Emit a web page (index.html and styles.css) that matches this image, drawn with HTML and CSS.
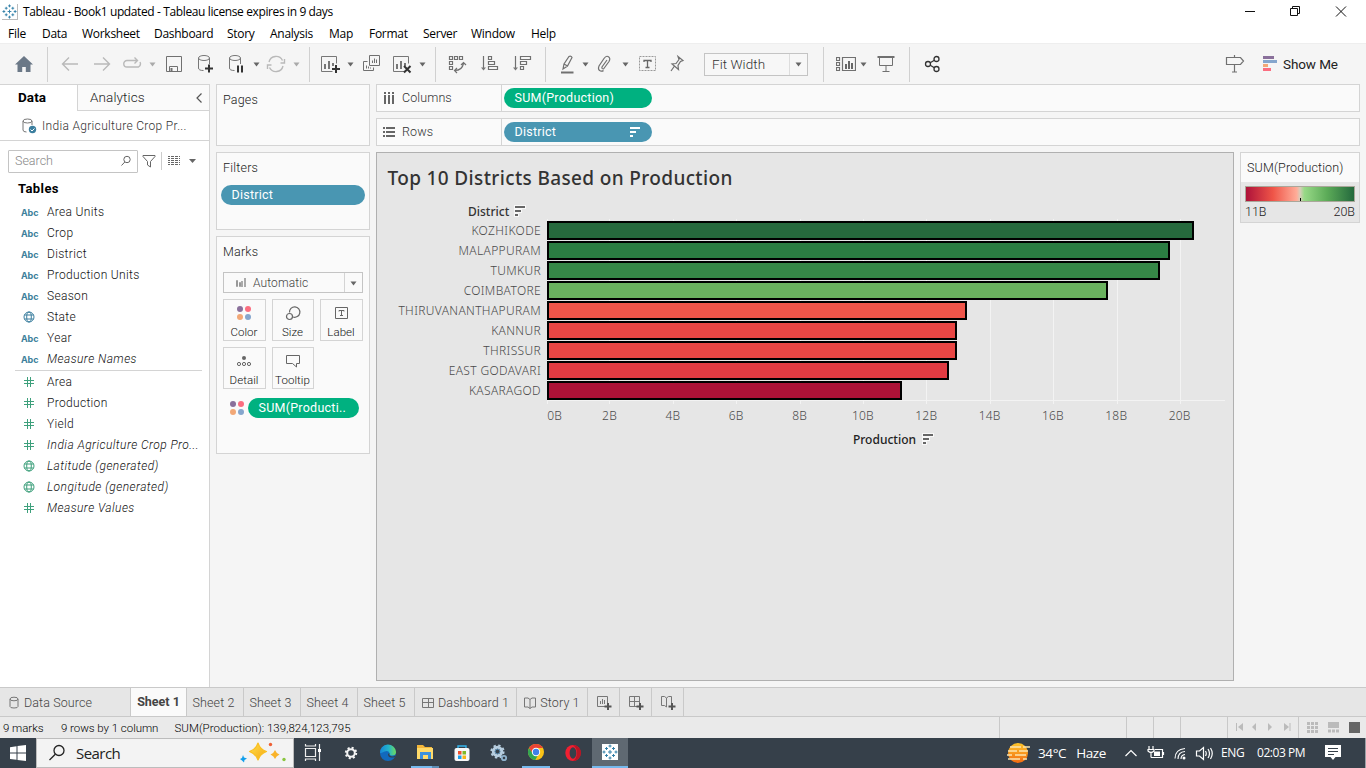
FILE: index.html
```html
<!DOCTYPE html>
<html lang="en">
<head>
<meta charset="utf-8">
<title>Tableau - Book1 updated</title>
<link rel="stylesheet" href="styles.css">
</head>
<body>
<svg class="defs" aria-hidden="true">
  <symbol id="caret" viewBox="0 0 7 20"><path d="M.5 8.500h6l-3 4z"/></symbol>
  <symbol id="hash" viewBox="0 0 12 12"><path d="M4.500 1v10M7.500 1v10M1 4.500h10M1 7.500h10" fill="none" stroke="#3ea07c"/></symbol>
  <symbol id="globe" viewBox="0 0 12 12"><g fill="none" stroke="currentColor"><circle cx="6" cy="6" r="5"/><ellipse cx="6" cy="6" rx="2.300" ry="5"/><path d="M1.500 4h9M1.500 8h9"/></g></symbol>
  <symbol id="dots" viewBox="0 0 16 16"><circle cx="4" cy="4" r="3" fill="#8a709b"/><circle cx="12" cy="4" r="3" fill="#fb6e80"/><circle cx="4" cy="12" r="3" fill="#f2a877"/><circle cx="12" cy="12" r="3" fill="#85a6cd"/></symbol>
  <symbol id="sort" viewBox="0 0 12 12"><path d="M1 1h10v2H1zM1 5h6v2H1zM1 9h3v2H1z"/></symbol>
  <symbol id="sort-halo" viewBox="0 0 12 12"><path d="M0 0h12v4H8v4H5v4H0z" fill="#f8f8f8"/><path d="M1 1h10v2H1zM1 5h6v2H1zM1 9h3v2H1z"/></symbol>
  <symbol id="bars" viewBox="0 0 20 20"><path d="M12.500 17.500H1.500v-15h15v7" fill="none" stroke="#777"/><path d="M4 10h2v5H4zM8 7h2v8H8zM12 9h2v3h-2z" fill="#777" stroke="none"/></symbol>
  <symbol id="db" viewBox="0 0 20 20"><g fill="none" stroke="#777"><ellipse cx="8" cy="4" rx="5.500" ry="2.500"/><path d="M2.500 4v10q0 2.500 5 2.500M13.500 4v6"/></g></symbol>
  <symbol id="tableau" viewBox="0 0 16 16"><path d="M8 6v4M6 8h4M8 .5v3M6.500 2h3M8 12.500v3M6.500 14h3M.5 8h3M2 6.500v3M12.500 8h3M14 6.500v3M4.500 3v3M3 4.500h3M11.500 3v3M10 4.500h3M4.500 10v3M3 11.500h3M11.500 10v3M10 11.500h3" stroke="#3381a9"/></symbol>
</svg>

<header class="titlebar">
  <svg class="app-logo" viewBox="0 0 16 16"><use href="#tableau"/></svg>
  <span class="title">Tableau - Book1 updated - Tableau license expires in 9 days</span>
  <svg class="win-buttons" viewBox="0 0 110 20" fill="none" stroke="#111"><path d="M5 9.500h10M50.500 6.500h7v7h-7zM52.500 6.500v-2h7v7h-2M96 4.500l10 10M106 4.500l-10 10"/></svg>
</header>
<nav class="menubar">
  <span class="w-file">File</span><span class="w-data">Data</span><span class="w-work">Worksheet</span><span class="w-dash">Dashboard</span><span class="w-story">Story</span><span class="w-ana">Analysis</span><span class="w-map">Map</span><span class="w-form">Format</span><span class="w-serv">Server</span><span class="w-wind">Window</span><span>Help</span>
</nav>

<div class="toolbar">
  <svg class="ic m14" viewBox="0 0 20 20"><path d="M10 2L1 10.500h2.500V18h4.700v-5h3.600v5h4.700v-7.500H19z" fill="#6b7887" stroke="none"/></svg>
  <i class="sep m13"></i>
  <svg class="ic m12 faint" viewBox="0 0 20 20"><path d="M18 10H3M9 3.500L2.500 10 9 16.500"/></svg>
  <svg class="ic m12 faint" viewBox="0 0 20 20"><path d="M2 10h15M11 3.500l6.500 6.500-6.500 6.500"/></svg>
  <svg class="ic m10 faint" viewBox="0 0 20 20"><path d="M15.500 6.500H5a3.200 3.200 0 0 0 0 6.500h11.500q3-2 1.500-5M12.500 3.500l3 3-3 3"/></svg>
  <svg class="caret m7 light"><use href="#caret"/></svg>
  <svg class="ic m8" viewBox="0 0 20 20"><path d="M2.500 2.500h15v15h-15zM5.500 17.500v-5h8v5"/><path d="M7.500 14v3.500" stroke-width="2"/></svg>
  <svg class="ic m12" viewBox="0 0 20 20"><use href="#db"/><path d="M13 10.500v8M9 14.500h8" stroke="#333" stroke-width="2"/></svg>
  <svg class="ic m11" viewBox="0 0 20 20"><use href="#db"/><path d="M11 11.500v7M15 11.500v7" stroke="#333" stroke-width="2"/></svg>
  <svg class="caret m6"><use href="#caret"/></svg>
  <svg class="ic m6 faint" viewBox="0 0 20 20"><path d="M3 8a7.200 7.200 0 0 1 13.500-1.500M17 12a7.200 7.200 0 0 1-13.500 1.500M18.500 5v4h-4M1.500 15v-4h4"/></svg>
  <svg class="caret m7 light"><use href="#caret"/></svg>
  <i class="sep m9"></i>
  <svg class="ic m10" viewBox="0 0 20 20"><use href="#bars"/><path d="M16 11v8M12 15h8" stroke="#333" stroke-width="2"/></svg>
  <svg class="caret m7"><use href="#caret"/></svg>
  <svg class="ic m8" viewBox="0 0 20 20"><path d="M7.500 1.500h10v10h-10zM5.500 7.500h-4v9h10v-3M10.500 9V6.500M12.500 9V4.500M14.500 9V5.500M4.500 14.500v-3M6.500 14.500v-2M8.500 14.500v-1"/></svg>
  <svg class="ic m10" viewBox="0 0 20 20"><use href="#bars"/><path d="M12 12l6.500 6.500M18.500 12L12 18.500" stroke="#333" stroke-width="2"/></svg>
  <svg class="caret m7"><use href="#caret"/></svg>
  <i class="sep m9"></i>
  <svg class="ic m11" viewBox="0 0 20 20"><path d="M2.500 2.500h3v3h-3zM7.500 2.500h3v3h-3zM12.500 2.500h3v3h-3zM2.500 7.500h3v3h-3zM2.500 12.500h3v3h-3zM8 16.500q7 0 8.500-7M14 11l2.500-2.500L19 11M10 14l-2.500 2.500L10 19" stroke-width="1.200"/></svg>
  <svg class="ic m13" viewBox="0 0 20 20"><path d="M3.500 2v13M8.500 2.500h3v3h-3zM8.500 7.500h6v3h-6zM8.500 12.500h9v3h-9z" stroke-width="1.200"/><path d="M1 13.500h5l-2.500 3z" fill="#777" stroke="none"/></svg>
  <svg class="ic m12" viewBox="0 0 20 20"><path d="M3.500 2v13M8.500 2.500h10v3h-10zM8.500 7.500h6v3h-6zM8.500 12.500h3v3h-3z" stroke-width="1.200"/><path d="M1 13.500h5l-2.500 3z" fill="#777" stroke="none"/></svg>
  <i class="sep m13"></i>
  <svg class="ic m12" viewBox="0 0 20 20"><path d="M5 15l1-5 5-7.500q2-1 3 1L9.500 12zM6 10l3.500 2" stroke-width="1.200"/><path d="M3 18.500h12.500" stroke-width="2"/></svg>
  <svg class="caret m4"><use href="#caret"/></svg>
  <svg class="ic m6" viewBox="0 0 20 20"><path d="M12 6l-5 7q-.5 2 1.500 2l5.500-7.500q2-3.500-1-5Q11 1.500 9 4.500l-5 7.500q-1.500 4 1.500 5 2 .5 3-.5" stroke-width="1.200"/></svg>
  <svg class="caret m7"><use href="#caret"/></svg>
  <svg class="ic m9" viewBox="0 0 20 20"><path d="M1.500 2.500h16v14h-16z" stroke="#999" stroke-dasharray="2 1"/><path d="M6 8V6.500h7V8M9.500 6.500v7M7.500 13.500h4" stroke="#666" stroke-width="1.300"/></svg>
  <svg class="ic m9" viewBox="0 0 20 20"><path d="M11 2.500l5 4-2.500 1-2.500 4 .5 4-3.500-3-3-2.500 4-.5 3-4zM7.500 12L4 17" stroke-width="1.200"/></svg>
  <div class="fit m17"><span>Fit Width</span><b><svg class="caret"><use href="#caret"/></svg></b></div>
  <i class="sep m15"></i>
  <svg class="ic m12" viewBox="0 0 20 20"><path d="M.5 3.500h3v3h-3zM.5 8.500h3v3h-3zM.5 13.500h3v3h-3zM6.500 3.500h13v13h-13z" stroke-width="1.200"/><path d="M9 10h2v5H9zM12 7h2v8h-2zM15 9h2v6h-2z" fill="#666" stroke="none"/></svg>
  <svg class="caret m4"><use href="#caret"/></svg>
  <svg class="ic m9" viewBox="0 0 20 20"><path d="M3.500 4v7.500h13V4M10 12v5.500M6.500 17.500h7"/><path d="M1.500 3h17" stroke-width="2"/></svg>
  <i class="sep m13"></i>
  <svg class="ic m12 dark" viewBox="0 0 20 20"><circle cx="6" cy="10" r="2.500"/><circle cx="14.500" cy="5" r="2.500"/><circle cx="14.500" cy="15" r="2.500"/><path d="M8.200 8.700l4.200-2.500M8.200 11.300l4.200 2.500"/></svg>
  <svg class="ic push" viewBox="0 0 20 20"><path d="M1.500 3.500h14l3 3.500-3 3.500h-14zM9.500 1v2.500M9.500 10.500v7M7 18h5" stroke-width="1.200"/></svg>
  <svg class="ic m15 plain" viewBox="0 0 20 20"><path d="M3 2h11v3H3z" fill="#8a709b"/><path d="M3 6h14v3H3z" fill="#85a6cd"/><path d="M3 10h5v3H3z" fill="#f2a877"/><path d="M3 14h8v3H3z" fill="#fb6e80"/></svg>
  <span class="showme">Show Me</span>
</div>

<main class="workspace">
  <aside class="data-pane">
    <div class="pane-tabs"><b>Data</b><div><span>Analytics</span><svg viewBox="0 0 8 12"><path d="M6.500 1.500L2 6l4.500 4.500" fill="none" stroke="#555" stroke-width="1.200"/></svg></div></div>
    <div class="source"><svg viewBox="0 0 16 18"><g fill="none" stroke="#777"><ellipse cx="6.500" cy="4" rx="4.500" ry="2"/><path d="M2 4v9q0 2 3.500 2M11 4v4"/></g><circle cx="11.500" cy="12.500" r="3.700" fill="#3c7f9f"/><path d="M9.500 12.500L11 14l2.500-2.500" fill="none" stroke="#fff"/></svg><span>India Agriculture Crop Pr...</span></div>
    <div class="finder">
      <div class="search"><span>Search</span><svg viewBox="0 0 12 12" fill="none" stroke="#666"><circle cx="7" cy="4.500" r="3.200"/><path d="M4.800 7L1.500 10.500"/></svg></div>
      <svg class="funnel" viewBox="0 0 14 14" fill="none" stroke="#666"><path d="M1 1.500h12v1L8.500 7.500V13l-3-2V7.500L1 2.500z"/></svg>
      <i></i>
      <svg class="list" viewBox="0 0 12 10"><path d="M0 .5h12M0 2.500h12M0 4.500h12M0 6.500h12M0 8.500h12" stroke="#666" stroke-dasharray="3 1" stroke-dashoffset="1" fill="none"/></svg>
      <svg class="down" viewBox="0 0 7 4"><path d="M0 0h7L3.500 4z" fill="#666"/></svg>
    </div>
    <h3>Tables</h3>
    <ul class="fields">
      <li><em>Abc</em>Area Units</li><li><em>Abc</em>Crop</li><li><em>Abc</em>District</li><li><em>Abc</em>Production Units</li><li><em>Abc</em>Season</li>
      <li><svg class="blue"><use href="#globe"/></svg>State</li><li><em>Abc</em>Year</li><li class="it"><em>Abc</em><span>Measure Names</span></li>
    </ul>
    <ul class="fields measures">
      <li><svg><use href="#hash"/></svg>Area</li><li><svg><use href="#hash"/></svg>Production</li><li><svg><use href="#hash"/></svg>Yield</li>
      <li class="it"><svg><use href="#hash"/></svg>India Agriculture Crop Pro...</li><li class="it"><svg class="green"><use href="#globe"/></svg>Latitude (generated)</li><li class="it"><svg class="green"><use href="#globe"/></svg>Longitude (generated)</li><li class="it"><svg><use href="#hash"/></svg>Measure Values</li>
    </ul>
  </aside>

  <section class="cards">
    <div class="card pages"><h4>Pages</h4></div>
    <div class="card filters"><h4>Filters</h4><div class="pill blue-pill">District</div></div>
    <div class="card marks"><h4>Marks</h4>
      <div class="mark-type"><svg viewBox="0 0 12 12"><path d="M1.500 3.500h1v6h-1zM4.500 5.500h1v4h-1z" fill="none" stroke="#999"/><path d="M6 4h2v6H6zM9 1h2v9H9z" fill="#aaa"/></svg><span>Automatic</span><b><svg class="caret"><use href="#caret"/></svg></b></div>
      <div class="mark-grid">
        <div><svg viewBox="0 0 16 16"><use href="#dots"/></svg>Color</div>
        <div><svg viewBox="0 0 16 16" fill="none" stroke="#666" stroke-width="1.200"><path d="M4.500 7.500a5.200 5.200 0 1 1 3.500 4.500"/><circle cx="4.500" cy="11.500" r="3"/></svg>Size</div>
        <div><svg viewBox="0 0 16 16" fill="none" stroke="#666"><path d="M2.500 2.500h12v11h-12z"/><path d="M6 6.500V5.500h5v1M8.500 5.500v5M7 10.500h3"/></svg>Label</div>
        <div><svg viewBox="0 0 16 16" fill="none" stroke="#666"><circle cx="8" cy="5" r="2" fill="#666" stroke="none"/><circle cx="3" cy="11" r="1.600"/><circle cx="8" cy="11" r="1.600"/><circle cx="13" cy="11" r="1.600"/></svg>Detail</div>
        <div><svg viewBox="0 0 16 16" fill="none" stroke="#666"><path d="M1.500 2.500h13v8h-3v3.500l-4-3.500h-6z"/></svg>Tooltip</div>
      </div>
      <div class="encoding"><svg viewBox="0 0 16 16"><use href="#dots"/></svg><div class="pill green-pill">SUM(Producti..</div></div>
    </div>
  </section>

  <section class="sheet">
    <div class="shelf"><div><svg viewBox="0 0 12 12"><path d="M2 0v2M6 0v2M10 0v2M2 3v9M6 3v9M10 3v9" stroke="#666" stroke-width="2"/></svg>Columns</div><div class="pill green-pill">SUM(Production)</div></div>
    <div class="shelf"><div><svg viewBox="0 0 12 12"><path d="M0 2h2M0 6h2M0 10h2M3 2h9M3 6h9M3 10h9" stroke="#666" stroke-width="2"/></svg>Rows</div><div class="pill blue-pill">District<svg viewBox="0 0 12 12"><use href="#sort"/></svg></div></div>
    <div class="view-row">
      <div class="view">
        <h1>Top 10 Districts Based on Production</h1>
        <div class="row-title"><span>District</span><svg viewBox="0 0 12 12"><use href="#sort-halo"/></svg></div>
        <div class="chart">
          <div class="names"><span>KOZHIKODE</span><span>MALAPPURAM</span><span>TUMKUR</span><span>COIMBATORE</span><span>THIRUVANANTHAPURAM</span><span>KANNUR</span><span>THRISSUR</span><span>EAST GODAVARI</span><span>KASARAGOD</span></div>
          <div class="plot">
            <svg class="grid" viewBox="0 0 678 186" fill="none" stroke="#f3f3f3"><path d="M.5 0v185M62.500 0v185M126.500 0v185M189.500 0v185M253.500 0v185M316.500 0v185M379.500 0v185M443.500 0v185M506.500 0v185M570.500 0v185M633.500 0v185M0 181.500h678"/></svg>
            <div class="bars">
            <div style="width:647px;background:#26693d"></div><div style="width:623px;background:#2b7d42"></div><div style="width:613px;background:#368747"></div><div style="width:561px;background:#6ab15f"></div><div style="width:420px;background:#ef554a"></div><div style="width:410px;background:#e94644"></div><div style="width:410px;background:#e94644"></div><div style="width:402px;background:#e13b42"></div><div style="width:355px;background:#ac1237"></div>
            </div>
          </div>
        </div>
        <div class="axis"><span>0B</span><span>2B</span><span>4B</span><span>6B</span><span>8B</span><span>10B</span><span>12B</span><span>14B</span><span>16B</span><span>18B</span><span>20B</span></div>
        <div class="axis-title"><span>Production</span><svg viewBox="0 0 12 12"><use href="#sort-halo"/></svg></div>
      </div>
      <div class="legend"><h4>SUM(Production)</h4><div class="legend-body"><div class="ramp"><i></i></div><div class="ends"><span>11B</span><span>20B</span></div></div></div>
    </div>
  </section>
</main>

<div class="tabs">
  <div class="t-source"><svg viewBox="0 0 12 14" fill="none" stroke="#777"><ellipse cx="6" cy="3" rx="4" ry="1.800"/><path d="M2 3v7.500q0 1.500 4 1.500t4-1.500V3"/></svg>Data Source</div>
  <div class="t-sheet active">Sheet 1</div><div class="t-sheet">Sheet 2</div><div class="t-sheet">Sheet 3</div><div class="t-sheet">Sheet 4</div><div class="t-sheet">Sheet 5</div>
  <div class="t-dash"><svg viewBox="0 0 12 12" fill="none" stroke="#777"><path d="M.5 1.500h11v9H.5zM6.500 1v10M.5 5.500h11"/></svg>Dashboard 1</div>
  <div class="t-story"><svg viewBox="0 0 12 12" fill="none" stroke="#777"><path d="M6 2.500L4 1H.5v9H4l2 1.500L8 10h3.500V1H8zM6 2.500v9"/></svg>Story 1</div>
  <div class="t-new"><svg viewBox="0 0 16 16" fill="none" stroke="#777"><path d="M10 11.500H1.500v-10h10v7M4.500 9V6M6.500 9V4M8.500 9V5"/><path d="M12 8v7M8.500 11.500h7" stroke="#555" stroke-width="2"/></svg></div>
  <div class="t-new"><svg viewBox="0 0 16 16" fill="none" stroke="#777"><path d="M9 11.500H1.500v-10h10V8M6.500 1.500v10M1.500 6.500h10"/><path d="M12 8v7M8.500 11.500h7" stroke="#555" stroke-width="2"/></svg></div>
  <div class="t-new"><svg viewBox="0 0 16 16" fill="none" stroke="#777"><path d="M6.500 3l-2-1.500h-3v9h3l2 1.500M6.500 3l2-1.500h3V8M6.500 3v9"/><path d="M12 8v7M8.500 11.500h7" stroke="#555" stroke-width="2"/></svg></div>
</div>

<footer class="status">
  <span class="s1">9 marks</span><span class="s2">9 rows by 1 column</span><span class="s3">SUM(Production): 139,824,123,795</span>
  <i class="c1"></i><i class="c2"></i><i class="c2"></i><i class="c3"></i>
  <div class="nav"><svg viewBox="0 0 70 20" fill="#bbb"><path d="M10 10l5-4v8zM8 6h1v8H8zM24 10l4-4v8zM44 10l-4-4v8zM61 10l-5-4v8zM61.500 6h1v8h-1z"/></svg></div>
  <div class="modes"><svg viewBox="0 0 60 20"><path d="M8 6.500h11M8 10.500h11M8 14.500h11" stroke="#bbb" stroke-width="3" stroke-dasharray="3 1"/><path d="M29 5h11v6H29z" fill="#bbb"/><path d="M29 14h11" stroke="#bbb" stroke-width="3" stroke-dasharray="3 1"/><path d="M50 5h11v11H50z" fill="#666"/></svg></div>
</footer>

<div class="taskbar">
  <div class="start"><svg viewBox="0 0 16 16" fill="#fff"><path d="M0 2.200L6.500 1.300v6.200H0zM7.500 1.100L16 0v7.500H7.500zM0 8.500h6.500v6.300L0 13.900zM7.500 8.500H16V16l-8.500-1.100z"/></svg></div>
  <div class="tb-search"><svg class="mag" viewBox="0 0 18 18" fill="none" stroke="#222" stroke-width="1.300"><circle cx="11" cy="6.500" r="5"/><path d="M7.300 10.200L1.500 16"/></svg><span>Search</span>
    <svg class="spark" viewBox="0 0 48 22"><defs><linearGradient id="gold" x2="1" y2="1"><stop stop-color="#ffe14a"/><stop offset="1" stop-color="#f5a614"/></linearGradient></defs><path d="M19 1q2 6.500 8.500 8.500Q21 12 19 18q-2-6-8.500-8.500Q17 7.500 19 1z" fill="url(#gold)" stroke="#f9bf22" stroke-width="1.200" stroke-linejoin="round"/><path d="M36 8q1 3 4.500 4.500Q37 14 36 17q-1-3-4.500-4.500Q35 11 36 8z" fill="#f9b32a"/><path d="M4 13l1 2.500L8 16.500 5.500 18 5 20.500 3 18.500 1 17l2-1z" fill="#109eeb"/><circle cx="31.500" cy="2.500" r="1.700" fill="#ee6035"/><circle cx="45" cy="17.500" r="1.700" fill="#8ac53f"/></svg></div>
  <svg class="app" viewBox="0 0 20 20" fill="none" stroke="#eee" stroke-width="1.200"><path d="M2.500 5.500h10v8h-10zM2.500 1v2h10V1M2.500 18v-2h10v2M16.500 1v17"/><path d="M15 6h3v3h-3z" fill="#fff" stroke="none"/></svg>
  <svg class="app" viewBox="0 0 20 20" fill="none" stroke="#f4f4f4"><circle cx="10" cy="10" r="3.800" stroke-width="2"/><circle cx="10" cy="10" r="5.200" stroke-width="2" stroke-dasharray="2.040 2.040"/></svg>
  <svg class="app" viewBox="0 0 20 20"><defs><linearGradient id="edge" x2="1"><stop stop-color="#1685d9"/><stop offset=".55" stop-color="#23b5c9"/><stop offset="1" stop-color="#71dc59"/></linearGradient></defs><circle cx="10" cy="10" r="8" fill="#1269bd"/><path d="M2 10a8 8 0 0 1 16-1q0 4-5 3.500-2-.5-1.500-2.500-1-3-5-1.500Q2.500 10.500 2 10z" fill="url(#edge)"/><path d="M11.500 10q-1 3 2.500 3.500 2 .2 3.500-1l-.5 1.500q-7 2-7-3z" fill="#36404a"/></svg>
  <div class="running two"><svg class="app" viewBox="0 0 20 20"><path d="M2 3h6l2 2h7v12H2z" fill="#f3b63a"/><path d="M2 6h16v11H2z" fill="#ffda69"/><path d="M5 17v-7h11v7h-3v-4H8v4z" fill="#3c91dc"/></svg></div>
  <svg class="app" viewBox="0 0 20 20"><path d="M6 6V3h8v3" fill="none" stroke="#36b5ed" stroke-width="1.400"/><rect x="2.500" y="5" width="15" height="13" rx="2" fill="#f8f8f8"/><path d="M6 8h3.500v3.500H6z" fill="#ef512e"/><path d="M10.500 8H14v3.500h-3.500z" fill="#80b927"/><path d="M6 12.500h3.500V16H6z" fill="#199eea"/><path d="M10.500 12.500H14V16h-3.500z" fill="#f9b615"/></svg>
  <svg class="app" viewBox="0 0 20 20" fill="none"><circle cx="8.500" cy="8.500" r="4.200" stroke="#b7cee0" stroke-width="3"/><circle cx="8.500" cy="8.500" r="6.200" stroke="#b7cee0" stroke-width="1.800" stroke-dasharray="2.400 2.470"/><circle cx="15" cy="15" r="2.200" stroke="#8fb2cd" stroke-width="1.800"/><circle cx="8.500" cy="8.500" r="2.300" stroke="#598bb0"/></svg>
  <div class="running"><svg class="app" viewBox="0 0 20 20"><circle cx="10" cy="10" r="8" fill="#fbc316"/><path d="M3.070 6a8 8 0 0 0 6.200 12l3.700-6.500L10 10l-3 1.500z" fill="#31a653"/><path d="M3.070 6A8 8 0 0 1 16.930 6H10L6.500 11z" fill="#e94335"/><circle cx="10" cy="10" r="4.200" fill="#fff"/><circle cx="10" cy="10" r="3.200" fill="#3f80e9"/></svg></div>
  <svg class="app" viewBox="0 0 20 20"><ellipse cx="10" cy="10" rx="7.700" ry="8" fill="#f21f31"/><path d="M10 2a8 8 0 0 1 0 16q4-3 4-8t-4-8z" fill="#b91524"/><ellipse cx="10" cy="10" rx="3.400" ry="5.800" fill="#36404a"/></svg>
  <div class="running current"><span><svg viewBox="0 0 16 16"><use href="#tableau"/></svg></span></div>
  <div class="tray">
    <svg class="haze" viewBox="0 0 24 22"><defs><linearGradient id="sun" y2="1" x2="0"><stop stop-color="#ffc62a"/><stop offset="1" stop-color="#f16a12"/></linearGradient></defs><circle cx="12" cy="11" r="10" fill="url(#sun)"/><path d="M4 5h11M17 5h7M2 9h9M13 9h9M1 13h5M9 13h11M2 17h12M17 17h4" stroke="#fbe5ae" stroke-width="1.700"/></svg>
    <span class="weather"><span>34°C</span><span>Haze</span></span>
    <svg class="icons" viewBox="0 0 90 20" fill="none" stroke="#fff" stroke-width="1.200"><path d="M1.500 13L7 7.500l5.500 5.500M31 6.500h7.500v8H27M39.500 9v3M25 3v3M29 3v3M24 6.500h6v1.500q-3 3-6 0zM27 9.500v5"/><path d="M30 8.500h6v4.500h-6z" fill="#fff" stroke="none"/><path d="M51 15.500q0-9 10-10M54 16q0-7 7-7.500M57 16q0-4 4-4.500" stroke-width="1.100"/><circle cx="60" cy="15" r="1.500" fill="#fff" stroke="none"/><path d="M72.500 8h3l4-3.500v12l-4-3.500h-3zM81.500 8q1.500 2.500 0 5M84 6q3 4.500 0 9M86.500 5q3.500 5.500 0 11"/></svg>
    <span class="lang">ENG</span><span class="clock">02:03 PM</span>
    <svg class="notice" viewBox="0 0 18 18"><path d="M1 1h16v12h-5.500L9 16l-2.500-3H1z" fill="#fff"/><path d="M4 4.500h10M4 7.500h10M4 10.500h6" stroke="#36404a"/></svg>
    <i></i>
  </div>
</div>
</body>
</html>
```

FILE: styles.css
```css
* { box-sizing: border-box; }
body { margin: 0; width: 1366px; height: 768px; overflow: hidden; background: #f5f5f5; color: #222; font: 300 12px/16px Roboto, "Liberation Sans", sans-serif; display: flex; flex-direction: column; }
svg { display: block; flex: none; }
h1, h3, h4, ul { margin: 0; padding: 0; font-weight: 300; list-style: none; }
i, em { font-style: normal; }
.defs { position: absolute; width: 0; height: 0; }

.titlebar { height: 23px; background: #fff; display: flex; align-items: center; color: #000; font: 12px/20px "Open Sans", sans-serif; }
.app-logo { width: 16px; height: 16px; margin: 0 5px 0 2px; border-right: 1px solid #bbb; border-bottom: 1px solid #bbb; }
.title { letter-spacing: -.38px; }
.win-buttons { width: 110px; height: 20px; margin: 0 16px 0 auto; }
.menubar { height: 20px; background: #fff; color: #000; display: flex; padding-left: 8px; font: 12px/21px "Open Sans", sans-serif; letter-spacing: -.28px; white-space: nowrap; }
.w-file { width: 34px; } .w-data { width: 40px; } .w-work { width: 72px; } .w-dash { width: 73px; } .w-story { width: 43px; } .w-ana { width: 59px; } .w-map { width: 40px; } .w-form { width: 54px; } .w-serv { width: 48px; } .w-wind { width: 60px; }

.toolbar { height: 41px; display: flex; align-items: center; background: #f5f5f5; border-top: 1px solid #eee; }
.ic { width: 20px; height: 20px; fill: none; stroke: #707070; }
.ic.faint { stroke: #b9b9b9; stroke-width: 1.400; }
.ic.dark { stroke: #333; stroke-width: 1.300; }
.ic.plain { stroke: none; }
.caret { width: 7px; height: 20px; fill: #666; }
.caret.light { fill: #aaa; }
.sep { width: 1px; height: 35px; background: #d0d0d0; flex: none; }
.m4 { margin-left: 4px; } .m6 { margin-left: 6px; } .m7 { margin-left: 7px; } .m8 { margin-left: 8px; } .m9 { margin-left: 9px; } .m10 { margin-left: 10px; } .m11 { margin-left: 11px; } .m12 { margin-left: 12px; } .m13 { margin-left: 13px; } .m14 { margin-left: 14px; } .m15 { margin-left: 15px; } .m17 { margin-left: 17px; }
.fit { width: 104px; height: 23px; border: 1px solid #c4c4c4; display: flex; padding-left: 7px; background: #f7f7f7; font-size: 13.500px; line-height: 21px; color: #333; letter-spacing: .05px; }
.fit b { width: 18px; margin-left: auto; border-left: 1px solid #ddd; display: flex; justify-content: center; }
.push { margin-left: auto; }
.showme { width: 83px; margin-left: 3px; font-size: 13.500px; font-weight: 400; letter-spacing: -.1px; }

.workspace { height: 603px; display: flex; }
.data-pane { width: 210px; background: #fff; border-right: 1px solid #d4d4d4; border-top: 1px solid #d4d4d4; display: flex; flex-direction: column; }
.pane-tabs { height: 26px; display: flex; font-size: 13.500px; line-height: 25px; }
.pane-tabs b { width: 77px; padding-left: 18px; color: #000; font-weight: 700; letter-spacing: .1px; }
.pane-tabs div { flex: 1; display: flex; align-items: center; padding: 0 6px 0 12px; border-left: 1px solid #d4d4d4; border-bottom: 1px solid #d4d4d4; background: #fafafa; letter-spacing: .1px; }
.pane-tabs svg { width: 8px; height: 12px; margin-left: auto; }
.source { height: 30px; display: flex; align-items: center; border-bottom: 1px solid #d4d4d4; padding-left: 21px; color: #333; font-size: 12px; letter-spacing: .32px; white-space: nowrap; }
.source svg { width: 16px; height: 18px; margin-right: 5px; }
.finder { display: flex; align-items: center; height: 40px; padding-left: 8px; }
.search { width: 130px; height: 23px; border: 1px solid #c4c4c4; border-radius: 1px; display: flex; align-items: center; justify-content: space-between; padding: 0 5px 0 6px; color: #888; font-size: 12.500px; }
.search svg { width: 12px; height: 12px; }
.funnel { width: 14px; height: 14px; margin: 0 5px 0 4px; }
.finder i { width: 1px; height: 18px; background: #ccc; }
.list { width: 12px; height: 10px; margin-left: 6px; }
.down { width: 7px; height: 4px; margin-left: 9px; }
.data-pane h3 { height: 20px; padding-left: 18px; font: 700 13px/16px Roboto, sans-serif; color: #000; letter-spacing: .4px; }
.fields li { height: 21px; display: flex; align-items: center; font-size: 12px; letter-spacing: .32px; color: #111; white-space: nowrap; }
.fields em { width: 26px; margin-left: 21px; font: 700 9px/19px Inter, sans-serif; letter-spacing: -.1px; color: #3d7f9c; padding-top: 1px; }
.fields svg { width: 12px; height: 12px; margin: 0 12px 0 23px; }
.fields .it { font-style: italic; letter-spacing: .45px; }
.fields .it em { font-style: normal; letter-spacing: -.1px; }
.fields .blue { color: #3c7f9f; } .fields .green { color: #3ea07c; }
.measures { margin-right: 7px; padding-top: 1px; }
.measures::before { content: ""; display: block; height: 1px; margin-left: 15px; border-top: 1px solid #d4d4d4; }
.measures li:first-of-type { margin-top: -1px; }

.cards { width: 154px; margin-left: 6px; display: flex; flex-direction: column; gap: 6px; }
.card { background: #fafafa; border: 1px solid #d4d4d4; }
.card h4 { padding: 7px 6px; letter-spacing: .2px; color: #222; font-size: 12.500px; }
.pages { height: 62px; } .filters { height: 78px; } .marks { height: 218px; }
.pill { height: 20px; border-radius: 10px; color: #fff; padding: 0 10.500px; line-height: 19px; font-weight: 400; font-size: 12.500px; letter-spacing: .25px; white-space: nowrap; }
.blue-pill { background: #4996b2; } .green-pill { background: #00b180; }
.filters .pill { margin: 2px 4px; }
.mark-type { margin: 5px 6px 0; height: 21px; border: 1px solid #c4c4c4; display: flex; line-height: 20px; color: #444; letter-spacing: .1px; }
.mark-type > svg { width: 12px; height: 12px; margin: 4px 6px 0 11px; }
.mark-type b { width: 18px; margin-left: auto; border-left: 1px solid #d4d4d4; display: flex; justify-content: center; }
.mark-grid { display: grid; grid-template-columns: 43px 42px 43px; grid-auto-rows: 42px; gap: 6px; padding: 6px 6px 0; }
.mark-grid div { border: 1px solid #d4d4d4; display: flex; flex-direction: column; align-items: center; padding: 5px 1px 0 0; font-size: 11.500px; line-height: 14px; color: #111; letter-spacing: .05px; white-space: nowrap; }
.mark-grid svg { width: 16px; height: 16px; margin-bottom: 4px; }
.encoding { display: flex; align-items: center; padding: 9px 10px 0 12px; gap: 3px; }
.encoding svg { width: 16px; height: 16px; }
.encoding .pill { width: 111px; }

.sheet { width: 984px; margin-left: 6px; display: flex; flex-direction: column; gap: 6px; }
.shelf { height: 28px; border: 1px solid #d4d4d4; background: #fafafa; display: flex; align-items: center; color: #333; font-size: 12.500px; }
.shelf > div:first-child { width: 125px; height: 26px; border-right: 1px solid #d4d4d4; display: flex; align-items: center; gap: 7px; padding-left: 6px; letter-spacing: .1px; }
.shelf > div svg { width: 12px; height: 12px; }
.shelf .pill { width: 148px; margin-left: 2px; display: flex; align-items: center; justify-content: space-between; padding-right: 11.500px; padding-bottom: 1px; fill: #fff; }
.view-row { display: flex; gap: 6px; align-items: flex-start; }
.view { width: 858px; height: 529px; border: 1px solid #b0b0b0; background: #e6e6e6; }
.view h1 { padding: 12px 0 0 10.500px; height: 51px; font: 500 19px/26px "Noto Sans", sans-serif; letter-spacing: .36px; color: #333; white-space: nowrap; }
.row-title { height: 15px; display: flex; padding-left: 91px; gap: 5px; font: 500 12px/16px "Noto Sans", sans-serif; color: #333; }
.row-title svg, .axis-title svg { width: 12px; height: 12px; margin-top: 1px; fill: #666; }
.chart { display: flex; height: 182px; }
.names { width: 164px; text-align: right; margin-right: 6px; padding-top: 2px; font: 300 12px/20px "Noto Sans", sans-serif; letter-spacing: .35px; color: #4a4a4a; }
.names span { display: block; height: 20px; white-space: nowrap; }
.plot { display: grid; width: 678px; height: 186px; }
.grid, .bars { grid-area: 1 / 1; }
.grid { width: 678px; height: 186px; }
.bars { display: flex; flex-direction: column; gap: 1px; padding-top: 2px; }
.bars div { height: 19px; border: 2px solid #000; flex: none; }
.axis { display: flex; margin-left: 137.500px; height: 26px; font: 300 12px/30px "Noto Sans", sans-serif; letter-spacing: .2px; color: #4a4a4a; text-align: center; }
.axis span { width: 63.350px; }
.axis span:first-child { text-indent: 17px; }
.axis-title { display: flex; justify-content: center; padding: 5px 0 0 177px; gap: 6px; font: 500 12px/16px "Noto Sans", sans-serif; }
.legend { width: 120px; height: 71px; border: 1px solid #d4d4d4; background: #fafafa; }
.legend h4 { height: 29px; padding: 7px 6px; font-size: 12.500px; letter-spacing: .15px; color: #222; }
.legend-body { height: 40px; background: #e6e6e6; padding: 4px; }
.ramp { height: 16px; border: 1px solid #aaa79a; background: linear-gradient(90deg, #ae123a, #ef5548 25%, #ffad99 47%, #d9cdbb 50%, #98d987 54%, #5cab58 75%, #24693d); display: flex; justify-content: center; align-items: flex-end; }
.ramp i { width: 1px; height: 3px; background: #000; }
.ends { display: flex; justify-content: space-between; line-height: 20px; font-size: 12.500px; color: #222; }

.tabs { height: 30px; flex: none; display: flex; border-top: 1px solid #c9c9c9; border-bottom: 1px solid #c9c9c9; background: #e6e6e6; color: #444; font-size: 12.500px; letter-spacing: .1px; }
.tabs div { display: flex; align-items: center; justify-content: center; border-right: 1px solid #c9c9c9; padding-top: 1px; white-space: nowrap; }
.tabs .t-source { width: 131px; justify-content: flex-start; padding-left: 8px; }
.t-source svg { width: 12px; height: 14px; margin-right: 4px; }
.tabs .t-sheet { width: 57px; padding-right: 3px; }
.tabs .active { width: 56px; background: #fafafa; color: #444; font-weight: 700; letter-spacing: 0; padding: 0 0 1px; }
.t-dash { width: 102px; } .t-story { width: 71px; } .t-new { width: 32px; }
.t-dash svg, .t-story svg { width: 12px; height: 12px; margin-right: 4px; }
.t-new svg { width: 16px; height: 16px; }
.status { height: 21px; display: flex; background: #eaeaea; font-size: 11.500px; line-height: 22px; color: #000; letter-spacing: -.05px; white-space: nowrap; }
.s1 { width: 61px; padding-left: 3px; } .s2 { width: 113.500px; } .s3 { width: 824.500px; letter-spacing: .03px; }
.status i { border-left: 1px solid #c9c9c9; }
.c1 { width: 127px; } .c2 { width: 27px; } .c3 { width: 47px; }
.nav { width: 70px; border-left: 1px solid #c9c9c9; } .modes { width: 60px; border-left: 1px solid #c9c9c9; margin-left: 1px; }
.nav svg { width: 70px; height: 20px; } .modes svg { width: 60px; height: 20px; overflow: visible; }

.taskbar { height: 30px; background: #36404a; display: flex; align-items: center; color: #fff; }
.start { width: 36px; display: flex; justify-content: center; }
.start svg { width: 16px; height: 16px; }
.tb-search { width: 258px; height: 30px; border: 1px solid #bcbcbc; background: #f3f3f3; color: #222; display: flex; align-items: center; padding: 0 6px 0 11px; font: 15px/28px "Open Sans", sans-serif; letter-spacing: -.55px; }
.mag { width: 18px; height: 18px; margin-right: 10px; }
.spark { width: 48px; height: 22px; margin-left: auto; }
.app { width: 20px; height: 20px; margin-right: 17px; }
.tb-search + .app { margin: 0 18px 0 9px; }
.running { height: 30px; width: 28px; margin: 0 13px 0 -4px; border-bottom: 2px solid #76b9ed; display: flex; justify-content: center; align-items: center; }
.running.two { border-image: linear-gradient(90deg, #76b9ed 20px, #5c8db5 20px) 2; }
.running .app { margin: 0; }
.current { width: 36px; margin: 0 0 0 -8px; background: #5f6972; }
.current span { width: 16px; height: 16px; background: #fff; }
.tray { margin-left: auto; display: flex; align-items: center; font: 12px/28px "Open Sans", sans-serif; white-space: nowrap; }
.haze { width: 24px; height: 22px; margin-right: 8px; }
.weather { width: 86px; display: flex; gap: 10px; font-size: 13.500px; letter-spacing: -.4px; }
.icons { width: 90px; height: 20px; }
.lang { width: 36px; margin-left: 7px; letter-spacing: -.4px; } .clock { width: 67px; letter-spacing: -.45px; }
.notice { width: 18px; height: 18px; margin-right: 23px; }
.tray i { width: 1px; height: 30px; background: #9ba1a7; margin-right: 0; }
```
